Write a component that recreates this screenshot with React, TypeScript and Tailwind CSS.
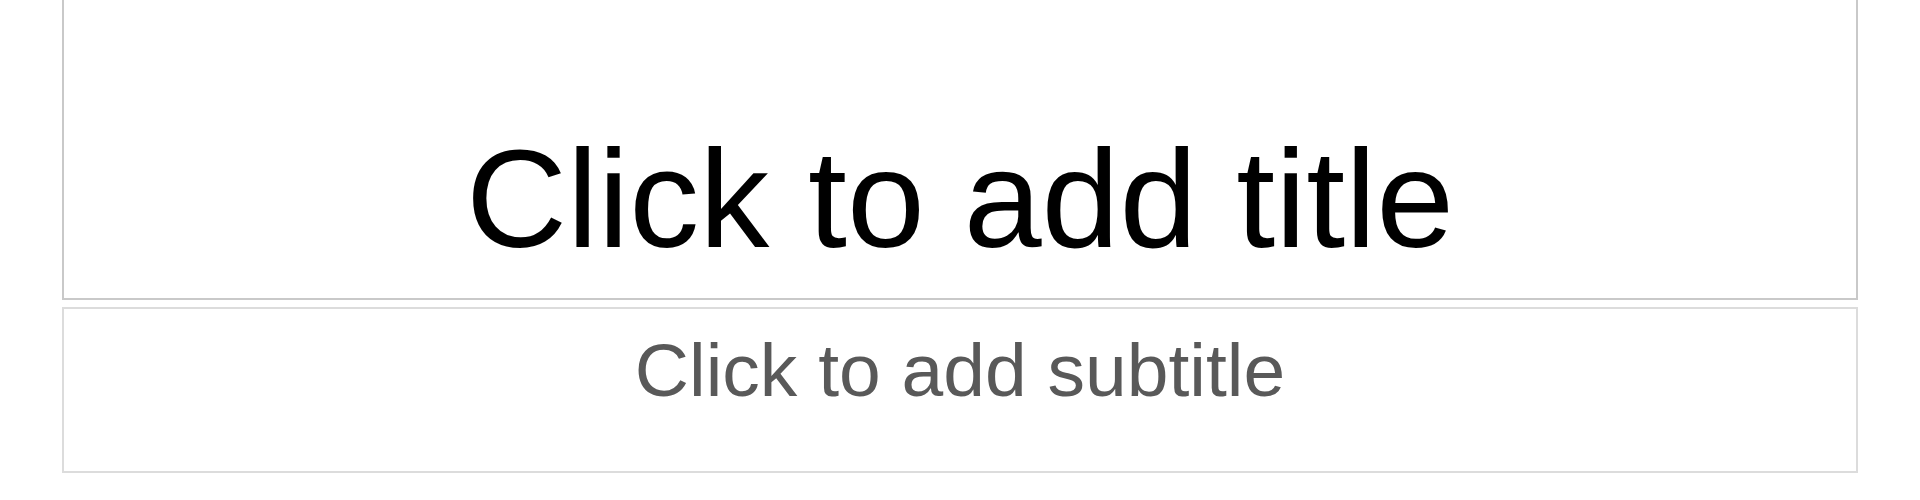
import React from 'react'

const TitleSlide = () => {
  return (
    <div className="pl-[62px] pr-[62px] bg-white" style={{ fontFamily: '"Liberation Sans", Arial, sans-serif' }}>
      {/* title placeholder, its top edge is cut off above the window */}
      <div className="h-[300px] border-x-2 border-b-2 border-[#c9c9c9] pt-[129px] text-center">
        <p className="text-[140px] leading-none text-black">Click to add title</p>
      </div>

      {/* subtitle placeholder */}
      <div className="mt-[7px] h-[166px] border-2 border-[#dcdcdc] pt-[24px] text-center">
        <p className="text-[75px] leading-none text-[#595959]">Click to add subtitle</p>
      </div>
    </div>
  )
}

export default function App() {
  return (
    <div className="w-[1920px] h-[500px] bg-white overflow-hidden">
      <TitleSlide />
    </div>
  )
}
